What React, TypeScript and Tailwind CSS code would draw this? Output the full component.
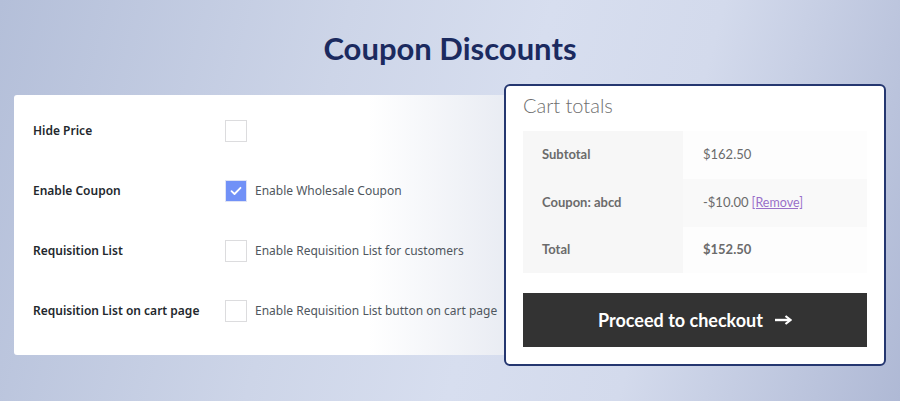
import React from "react";

function Box({ checked }: { checked?: boolean }) {
  if (checked) {
    return (
      <div className="w-[22px] h-[22px] shrink-0 bg-[#7191f7] border border-[#dfe3f5] flex items-center justify-center">
        <svg width="12" height="10" viewBox="0 0 12 10" fill="none">
          <path d="M1.5 5.2 L4.5 8 L10.5 1.8" stroke="#fff" strokeWidth="1.8" strokeLinecap="round" strokeLinejoin="round" />
        </svg>
      </div>
    );
  }
  return <div className="w-[22px] h-[22px] shrink-0 bg-white border border-[#dcdcde]" />;
}

const rows = [
  { label: "Hide Price", desc: "", checked: false },
  { label: "Enable Coupon", desc: "Enable Wholesale Coupon", checked: true },
  { label: "Requisition List", desc: "Enable Requisition List for customers", checked: false },
  { label: "Requisition List on cart page", desc: "Enable Requisition List button on cart page", checked: false },
];

export default function App() {
  return (
    <div className="w-[900px] h-[401px] overflow-hidden bg-[linear-gradient(105deg,#b4bfd9_0%,#cdd5e8_35%,#d7deef_55%,#d3daec_72%,#afb9d5_100%)]">
      <div className="h-[84px] pt-[29px] text-center font-['Lato'] text-[31px] leading-[38px] font-bold text-[#1b2a5f]">
        Coupon Discounts
      </div>
      <div className="flex items-start pl-[14px]">
        <div className="mt-[11px] w-[492px] h-[260px] rounded-[3px] bg-[linear-gradient(to_right,#ffffff_72%,#e9ecf3)] pt-[6px] pl-[19px] font-['Noto_Sans']">
          {rows.map((r) => (
            <div key={r.label} className="h-[60px] flex items-center">
              <div className="w-[192px] shrink-0 text-[12px] font-semibold text-[#23282d]">{r.label}</div>
              <Box checked={r.checked} />
              {r.desc && <div className="ml-[8px] text-[12px] text-[#50575e] whitespace-nowrap">{r.desc}</div>}
            </div>
          ))}
        </div>
        <div className="relative -ml-[2px] w-[382px] h-[282px] rounded-[6px] border-2 border-[#253770] bg-white px-[17px] pt-[5px] font-['Lato']">
          <div className="text-[20px] leading-[28px] font-light text-[#6e6e6e]">Cart totals</div>
          <div className="mt-[12px] text-[13px] text-[#6b6b6b]">
            <div className="flex h-[48px]">
              <div className="w-[160px] bg-[#f7f7f7] pl-[19px] flex items-center font-bold">Subtotal</div>
              <div className="flex-1 bg-[#fdfdfd] pl-[20px] flex items-center">$162.50</div>
            </div>
            <div className="flex h-[48px]">
              <div className="w-[160px] bg-[#f7f7f7] pl-[19px] flex items-center font-bold">Coupon: abcd</div>
              <div className="flex-1 bg-[#f9f9f9] pl-[20px] flex items-center">
                -$10.00<span className="ml-[3px] text-[12.5px] text-[#9a6fc9] underline">[Remove]</span>
              </div>
            </div>
            <div className="flex h-[46px]">
              <div className="w-[160px] bg-[#f7f7f7] pl-[19px] flex items-center font-bold">Total</div>
              <div className="flex-1 bg-[#fdfdfd] pl-[20px] flex items-center font-bold">$152.50</div>
            </div>
          </div>
          <div className="mt-[20px] h-[54px] bg-[#333333] flex items-center justify-center gap-[11px] text-white text-[18px] font-bold">
            <span>Proceed to checkout</span>
            <svg width="18" height="12" viewBox="0 0 18 12" fill="none">
              <path d="M1 6 H15" stroke="#fff" strokeWidth="2.4" />
              <path d="M11.5 2 L16.5 6 L11.5 10" stroke="#fff" strokeWidth="2.2" fill="none" />
            </svg>
          </div>
        </div>
      </div>
    </div>
  );
}
